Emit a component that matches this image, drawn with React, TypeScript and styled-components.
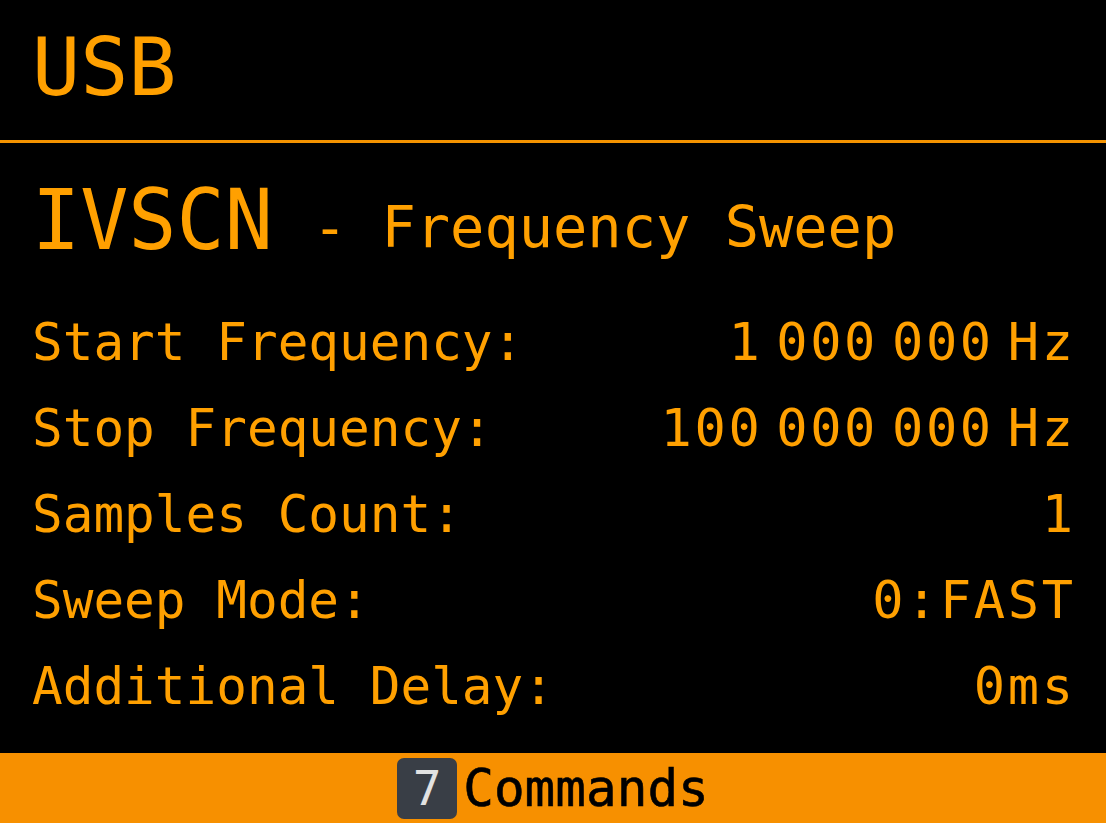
import React from "react";
import styled, { createGlobalStyle } from "styled-components";

const Global = createGlobalStyle`
  html, body { margin: 0; padding: 0; background: #000; }
  body { font-family: "DejaVu Sans Mono", "Liberation Mono", monospace; }
`;

const ORANGE = "#ffa000";

const Screen = styled.div`
  width: 1106px;
  height: 823px;
  background: #000;
  display: flex;
  flex-direction: column;
  overflow: hidden;
  color: ${ORANGE};
`;

const Header = styled.header`
  box-sizing: border-box;
  height: 143px;
  border-bottom: 3px solid #f59300;
  padding: 18px 0 0 32px;
  font-size: 80px;
  line-height: 100px;
`;

const Body = styled.main`
  flex: 1;
  padding: 0 33px 0 32px;
  display: flex;
  flex-direction: column;
`;

const TitleRow = styled.div`
  display: flex;
  align-items: baseline;
  height: 156px;
  padding-top: 35px;
  box-sizing: border-box;
`;

const Title = styled.span`
  font-size: 80px;
  line-height: 90px;
  display: inline-block;
  transform: scaleY(1.05);
  transform-origin: bottom;
`;

const Subtitle = styled.span`
  font-size: 57px;
  margin-left: 40px;
  white-space: pre;
  position: relative;
  top: -3px;
`;

const Row = styled.div`
  display: flex;
  justify-content: space-between;
  align-items: baseline;
  height: 86px;
  font-size: 51px;
  line-height: 86px;
  white-space: pre;
`;

const Label = styled.span``;

const Value = styled.span`
  display: flex;
  font-size: 52px;
  letter-spacing: 2.6px;
  margin-right: -2.6px;
`;

const Group = styled.span<{ $first: boolean }>`
  margin-left: ${(p) => (p.$first ? 0 : 14)}px;
`;

const Footer = styled.footer`
  height: 70px;
  background: #f79000;
  display: flex;
  align-items: center;
  justify-content: center;
  gap: 6px;
`;

const Badge = styled.span`
  width: 60px;
  height: 61px;
  border-radius: 7px;
  background: #393e46;
  color: #e2e2e2;
  font-size: 48px;
  display: flex;
  align-items: center;
  justify-content: center;
`;

const FooterText = styled.span`
  color: #000;
  font-size: 51px;
  line-height: 61px;
  -webkit-text-stroke: 0.6px #000;
`;

const rows: [string, string][] = [
  ["Start Frequency:", "1 000 000 Hz"],
  ["Stop Frequency:", "100 000 000 Hz"],
  ["Samples Count:", "1"],
  ["Sweep Mode:", "0:FAST"],
  ["Additional Delay:", "0ms"],
];

export default function App() {
  return (
    <>
      <Global />
      <Screen>
        <Header>USB</Header>
        <Body>
          <TitleRow>
            <Title>IVSCN</Title>
            <Subtitle>- Frequency Sweep</Subtitle>
          </TitleRow>
          {rows.map(([l, v]) => (
            <Row key={l}>
              <Label>{l}</Label>
              <Value>
                {v.split(" ").map((g, i) => (
                  <Group key={i} $first={i === 0}>
                    {g}
                  </Group>
                ))}
              </Value>
            </Row>
          ))}
        </Body>
        <Footer>
          <Badge>7</Badge>
          <FooterText>Commands</FooterText>
        </Footer>
      </Screen>
    </>
  );
}
